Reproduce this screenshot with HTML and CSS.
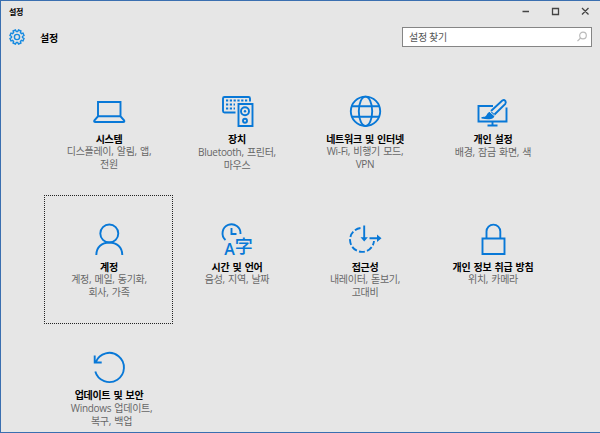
FILE: index.html
```html
<!DOCTYPE html>
<html lang="ko">
<head>
<meta charset="utf-8">
<title>설정</title>
<link rel="stylesheet" href="styles.css">
</head>
<body>
<div class="window">
  <header class="titlebar">
    <span class="caption">설정</span>
    <svg class="controls" width="76" height="12" viewBox="0 0 76 12"><path d="M4.500 6.500h6.500M34.500 3.500h6v6h-6zM64 3l6.500 6.500M70.500 3L64 9.500"/></svg>
  </header>
  <div class="toolbar">
    <svg class="gear" width="16" height="16" viewBox="0 0 16 16"><path d="M6.500 1L7.300 2.500H8.700L9.500 1L11.900 2L11.400 3.600L12.400 4.600L14 4.100L15 6.500L13.500 7.300V8.700L15 9.500L14 11.900L12.400 11.400L11.400 12.400L11.900 14L9.500 15L8.700 13.500H7.300L6.500 15L4.100 14L4.600 12.400L3.600 11.400L2 11.900L1 9.500L2.500 8.700V7.300L1 6.500L2 4.100L3.600 4.600L4.600 3.600L4.100 2Z"/><circle cx="8" cy="8" r="2.600"/></svg>
    <h1>설정</h1>
    <div class="search"><span>설정 찾기</span><svg width="12" height="12" viewBox="0 0 12 12"><circle cx="7" cy="4.500" r="3.300"/><path d="M4.600 7L1.500 10.200"/></svg></div>
  </div>
  <main class="grid">
    <section class="tile">
      <svg class="icon" viewBox="0 0 32 32"><path d="M5 21V7h22.500v14M5 21.300h22.500l3.700 4.200q.6 1.500-1 1.500H2.300q-1.600 0-1-1.500z"/></svg>
      <h2>시스템</h2><p>디스플레이, 알림, 앱,<br>전원</p>
    </section>
    <section class="tile">
      <svg class="icon" viewBox="0 0 32 32"><path d="M14.500 17.500H3.500Q2 17.500 2 16V3.500Q2 2 3.500 2h24Q29 2 29 3.500v3"/><path class="keys" d="M5 5.500h21.500M5 9.500h9M5 13.500h9"/><path d="M17.500 9h14v22h-14z"/><circle cx="24" cy="16.200" r="4"/><circle class="fill" cx="24" cy="16.200" r="1.200"/><circle cx="24" cy="25.700" r="2"/></svg>
      <h2>장치</h2><p class="low">Bluetooth, 프린터,<br>마우스</p>
    </section>
    <section class="tile">
      <svg class="icon" viewBox="0 0 32 32"><circle cx="16.500" cy="16.300" r="14.700"/><ellipse cx="16.500" cy="16.300" rx="6.700" ry="14.700"/><path d="M3 11.300h27M3 21.700h27"/></svg>
      <h2>네트워크 및 인터넷</h2><p>Wi-Fi, 비행기 모드,<br>VPN</p>
    </section>
    <section class="tile">
      <svg class="icon" viewBox="0 0 32 32"><path d="M16 11H1.500v15.500h28V12.500M15.500 26.500v4M10.500 30.500h10"/><path class="fill" d="M4.500 22c3.500 0 4.500-.5 5.500-2.700 1.200-2.600 3.300-3.300 5.500-2 2.600 1.700 2.600 4.500.3 6-2 1.300-6.500 1.200-11.300.2z"/><path d="M14 16L25.300 5.500q1.800-1 3 .3 1 1.400 0 3L17.500 19.500"/><path class="gap" d="M12.300 16.300l5.400 4.800"/></svg>
      <h2>개인 설정</h2><p class="low">배경, 잠금 화면, 색</p>
    </section>
    <section class="tile focused">
      <svg class="icon" viewBox="0 0 32 32"><circle cx="16.300" cy="10.500" r="9"/><path d="M3.300 32C3.300 24 9 19.500 16.300 19.500S29.300 24 29.300 32"/></svg>
      <h2>계정</h2><p>계정, 메일, 동기화,<br>회사, 가족</p>
    </section>
    <section class="tile">
      <svg class="icon" viewBox="0 0 32 32"><path d="M4.500 17A9 9 0 1 1 19.500 11M10.500 5v6h5"/><text class="glyph-a" x="3.300" y="32">A</text><text class="glyph-zi" x="13.800" y="30">字</text></svg>
      <h2>시간 및 언어</h2><p>음성, 지역, 날짜</p>
    </section>
    <section class="tile">
      <svg class="icon" viewBox="0 0 32 32"><path class="dash" d="M11.500 5A12 12 0 1 0 25 18"/><path d="M15.200 2.500v14M20.500 15.300h10"/><path class="fill" d="M11.500 14.200h7.400l-3.700 4.300zM28 11.500l4.500 3.800-4.500 3.800z"/></svg>
      <h2>접근성</h2><p>내레이터, 돋보기,<br>고대비</p>
    </section>
    <section class="tile">
      <svg class="icon" viewBox="0 0 32 32"><path d="M5.500 15.500h22v15.500h-22zM9.500 15.500V8.500a6.900 6.900 0 0 1 13.800 0v7"/></svg>
      <h2>개인 정보 취급 방침</h2><p>위치, 카메라</p>
    </section>
    <section class="tile">
      <svg class="icon" viewBox="0 0 32 32"><path d="M2.300 20.500A14.600 14.600 0 1 0 2.800 11M1.700 4.500v7h7"/></svg>
      <h2>업데이트 및 보안</h2><p class="low shifted">Windows 업데이트,<br>복구, 백업</p>
    </section>
  </main>
</div>
</body>
</html>
```

FILE: styles.css
```css
* { box-sizing: border-box; }
body {
  margin: 0;
  font-family: "Open Sans", "Noto Sans CJK KR", sans-serif;
  color: #000;
}
.window {
  width: 600px;
  height: 433px;
  overflow: hidden;
  background: #e6e6e6;
  border: 1px solid #3a6fb0;
  border-right: 0;
}
svg { fill: none; display: block; overflow: visible; }
.titlebar {
  height: 22px;
  display: flex;
  justify-content: space-between;
  padding: 4px 6px 0 8px;
}
.caption { font-size: 8px; line-height: 14px; font-weight: 700; letter-spacing: -.4px; }
.controls { stroke: #444; stroke-width: 1.3; }
.toolbar {
  height: 25px;
  display: flex;
  align-items: center;
  padding: 2px 8px 0 8px;
}
.gear { stroke: #168ae0; stroke-width: 1.4; }
h1 {
  margin: 2px auto 0 15px;
  font-size: 10px;
  line-height: 14px;
  letter-spacing: -.3px;
}
.search {
  width: 190px;
  height: 20px;
  display: flex;
  align-items: center;
  justify-content: space-between;
  padding: 0 3px 0 6px;
  margin-top: 1px;
  background: #fff;
  border: 1px solid #858585;
  font-size: 10px;
  letter-spacing: -.3px;
  line-height: 14px;
  color: #555;
}
.search svg { stroke: #bbb; stroke-width: 1.2; }
.grid {
  display: grid;
  grid-template-columns: repeat(4, 128px);
  grid-auto-rows: 128px;
  padding: 19px 0 0 44px;
}
.tile {
  position: relative;
  display: flex;
  flex-direction: column;
  align-items: center;
  padding-top: 28px;
  text-align: center;
}
.focused::before {
  content: "";
  position: absolute;
  inset: 0 0 -1px -1px;
  border: 1px dotted #222;
}
.icon { width: 32px; height: 32px; flex: none; stroke: #0878d7; stroke-width: 1.9; }
.fill { fill: #0878d7; stroke: none; }
.gap { stroke: #e6e6e6; stroke-width: 1; }
.keys { stroke-dasharray: 2.200 1.600; }
.dash { stroke-dasharray: 6 2.200; }
.glyph-a, .glyph-zi { fill: #0878d7; stroke: none; }
.glyph-a { font: 600 16px "Open Sans", sans-serif; }
.glyph-zi { font: 500 18px "Noto Sans CJK KR", sans-serif; }
h2 {
  margin: 6px 0 0;
  font-size: 10px;
  line-height: 12px;
  letter-spacing: -.3px;
  word-spacing: .9px;
  white-space: nowrap;
}
p {
  margin: 0;
  font-size: 10px;
  line-height: 13px;
  letter-spacing: -.3px;
  word-spacing: .9px;
  color: #666;
  white-space: nowrap;
}
.low { margin-top: 1px; }
.shifted { padding-left: 5px; }
```
